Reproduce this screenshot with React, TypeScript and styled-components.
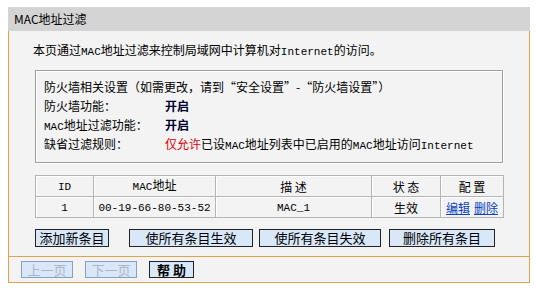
import styled, { createGlobalStyle } from 'styled-components';

const GlobalStyle = createGlobalStyle`
    body {
        margin: 0;
        padding: 7px 0 0 8px;
        background: #ffffff;
        font-family: "Liberation Mono", "Noto Sans CJK SC", monospace;
        font-size: 12px;
        color: #000;
    }
`
const Panel = styled.div`
    width: 522px;
    background: #f3f3f3;
    border-bottom: 1px solid #e0a24a;
`
const Header = styled.div`
    height: 24px;
    line-height: 24px;
    background: #d4d4d4;
    padding-left: 6px;
    font-family: "Noto Sans CJK SC", sans-serif;
    font-size: 12px;
`
const Body = styled.div`
    border-left: 1px solid #e0a24a;
    border-right: 1px solid #e0a24a;
`
const Intro = styled.div`
    padding: 11px 0 0 24px;
    height: 28px;
    line-height: 16px;
    font-family: "Noto Sans CJK SC", sans-serif;
`
const Latin = styled.span`
    font-family: "Liberation Mono", monospace;
    font-size: 11px;
`
const Settings = styled.div`
    margin: 0 26px 0 26px;
    height: 93px;
    border: 1px solid #a0a0a0;
    box-shadow: inset 1px 1px 0 #ffffff, 1px 1px 0 #ffffff;
    padding: 6px 0 0 8px;
    box-sizing: border-box;
    font-family: "Noto Sans CJK SC", sans-serif;
`
const Line = styled.div`
    display: flex;
    height: 19px;
    line-height: 19px;
`
const Label = styled.span`
    width: 121px;
    flex: none;
`
const Value = styled.span<{ $strong?: boolean }>`
    font-weight: ${p => p.$strong ? 'bold' : 'normal'};
    color: ${p => p.$strong ? '#000033' : '#000'};
`
const Red = styled.span`
    color: #e00000;
`
const Table = styled.table`
    margin: 12px 0 0 26px;
    border-collapse: collapse;
    width: 469px;
    font-family: "Noto Sans CJK SC", sans-serif;
`
const Cell = styled.td<{ $w?: number }>`
    border: 1px solid #b4b4b4;
    box-shadow: inset 1px 1px 0 #ffffff;
    height: 17px;
    padding: 0;
    text-align: center;
    line-height: 17px;
    width: ${p => p.$w ? p.$w + 'px' : 'auto'};
`
const Link = styled.a`
    color: #0a3fc0;
    text-decoration: underline;
    margin: 0 2px;
    cursor: pointer;
`
const Buttons = styled.div`
    display: flex;
    padding: 11px 0 0 26px;
    height: 27px;
`
const Button = styled.button<{ $w: number; $after: number }>`
    width: ${p => p.$w}px;
    margin-right: ${p => p.$after}px;
    height: 18px;
    padding: 0;
    background: #d9e8f8;
    border: 1px solid #222;
    font-family: "Noto Sans CJK SC", sans-serif;
    font-size: 13px;
    line-height: 16px;
    color: #000;
`
const Footer = styled.div`
    border-top: 1px solid #e0a24a;
    display: flex;
    gap: 12px;
    padding: 4px 0 0 12px;
    height: 21px;
`
const NavButton = styled.button<{ $off?: boolean; $w: number }>`
    width: ${p => p.$w}px;
    height: 17px;
    padding: 0;
    background: #d9e8f8;
    border: 1px solid ${p => p.$off ? '#8aa0c0' : '#222'};
    color: ${p => p.$off ? '#a9b6c8' : '#000'};
    font-family: "Noto Sans CJK SC", sans-serif;
    font-size: 13px;
    font-weight: ${p => p.$off ? 'normal' : 'bold'};
    line-height: 15px;
`

export default function App() {
    return (
        <>
            <GlobalStyle />
            <Panel>
                <Header>MAC地址过滤</Header>
                <Body>
                    <Intro>本页通过<Latin>MAC</Latin>地址过滤来控制局域网中计算机对<Latin>Internet</Latin>的访问。</Intro>
                    <Settings>
                        <Line>防火墙相关设置（如需更改，请到“安全设置”-“防火墙设置”）</Line>
                        <Line><Label>防火墙功能：</Label><Value $strong>开启</Value></Line>
                        <Line><Label><Latin>MAC</Latin>地址过滤功能：</Label><Value $strong>开启</Value></Line>
                        <Line><Label>缺省过滤规则：</Label><Value><Red>仅允许</Red>已设<Latin>MAC</Latin>地址列表中已启用的<Latin>MAC</Latin>地址访问<Latin>Internet</Latin></Value></Line>
                    </Settings>
                    <Table>
                        <tbody>
                            <tr>
                                <Cell $w={57}><Latin>ID</Latin></Cell>
                                <Cell $w={121}><Latin>MAC</Latin>地址</Cell>
                                <Cell $w={155}>描 述</Cell>
                                <Cell $w={68}>状 态</Cell>
                                <Cell>配 置</Cell>
                            </tr>
                            <tr>
                                <Cell><Latin>1</Latin></Cell>
                                <Cell><Latin>00-19-66-80-53-52</Latin></Cell>
                                <Cell><Latin>MAC_1</Latin></Cell>
                                <Cell>生效</Cell>
                                <Cell><Link>编辑</Link><Link>删除</Link></Cell>
                            </tr>
                        </tbody>
                    </Table>
                    <Buttons>
                        <Button $w={74} $after={20}>添加新条目</Button>
                        <Button $w={124} $after={6}>使所有条目生效</Button>
                        <Button $w={122} $after={8}>使所有条目失效</Button>
                        <Button $w={106} $after={0}>删除所有条目</Button>
                    </Buttons>
                    <Footer>
                        <NavButton $off $w={52}>上一页</NavButton>
                        <NavButton $off $w={52}>下一页</NavButton>
                        <NavButton $w={45}>帮 助</NavButton>
                    </Footer>
                </Body>
            </Panel>
        </>
    );
}
